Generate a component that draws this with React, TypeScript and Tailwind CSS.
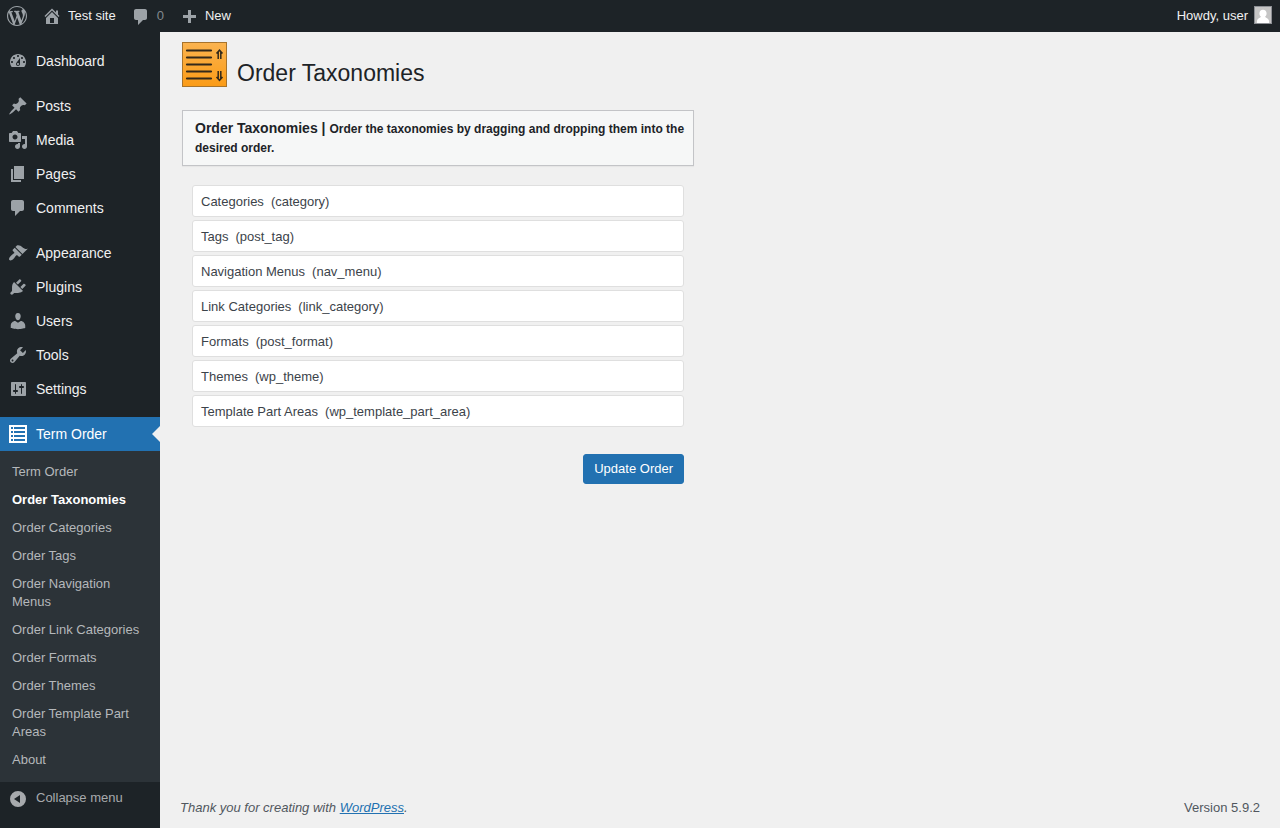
import type { ReactNode } from "react"
import clsx from "clsx"

type IconProps = {
  path: string
  className?: string
}

type MenuEntry = {
  label: string
  icon: string
}

const icons = {
  wordpress:
    "M20 10c0-5.51-4.49-10-10-10C4.48 0 0 4.49 0 10c0 5.52 4.48 10 10 10 5.51 0 10-4.48 10-10zM7.78 15.37L4.37 6.22c.55-.02 1.17-.08 1.17-.08.5-.06.44-1.13-.06-1.11 0 0-1.45.11-2.37.11-.18 0-.37 0-.58-.01C4.12 2.69 6.87 1.11 10 1.11c2.33 0 4.45.87 6.05 2.34-.68-.11-1.65.39-1.65 1.58 0 .74.45 1.36.9 2.1.35.61.55 1.36.55 2.46 0 1.49-1.4 5-1.4 5l-3.03-8.37c.54-.02.82-.17.82-.17.5-.05.44-1.25-.06-1.22 0 0-1.44.12-2.38.12-.87 0-2.33-.12-2.33-.12-.5-.03-.56 1.2-.06 1.22l.92.08 1.26 3.41zM17.41 10c.24-.64.74-1.87.43-4.25.7 1.29 1.05 2.71 1.05 4.25 0 3.29-1.73 6.24-4.4 7.78.97-2.59 1.94-5.2 2.92-7.78zM6.1 18.09C3.12 16.65 1.11 13.53 1.11 10c0-1.3.23-2.48.72-3.59C3.25 10.3 4.67 14.2 6.1 18.09zm4.03-6.63l2.58 6.98c-.86.29-1.76.45-2.71.45-.79 0-1.57-.11-2.29-.33.81-2.38 1.62-4.74 2.42-7.1z",
  home: "M16 8.5l1.53 1.53-1.06 1.06L10 4.6l-6.47 6.49-1.06-1.06L10 2.5l4 4v-2h2v4zm-6-2.46l6 5.99V18H4v-5.97zM12 17v-5H8v5h4z",
  plus: "M17 7v3h-5v5H9v-5H4V7h5V2h3v5h5z",
  dashboard:
    "M3.76 16h12.48c1.1-1.37 1.76-3.11 1.76-5 0-4.42-3.58-8-8-8s-8 3.58-8 8c0 1.89.66 3.63 1.76 5zM10 4c.55 0 1 .45 1 1s-.45 1-1 1-1-.45-1-1 .45-1 1-1zM6 6c.55 0 1 .45 1 1s-.45 1-1 1-1-.45-1-1 .45-1 1-1zm8 0c.55 0 1 .45 1 1s-.45 1-1 1-1-.45-1-1 .45-1 1-1zm-5.37 5.55L12 7v6c0 1.1-.9 2-2 2s-2-.9-2-2c0-.57.24-1.08.63-1.45zM4 10c.55 0 1 .45 1 1s-.45 1-1 1-1-.45-1-1 .45-1 1-1zm12 0c.55 0 1 .45 1 1s-.45 1-1 1-1-.45-1-1 .45-1 1-1zm-5 3c0-.55-.45-1-1-1s-1 .45-1 1 .45 1 1 1 1-.45 1-1z",
  post: "M10.44 3.02l1.82-1.82 6.36 6.35-1.83 1.82c-1.05-.68-2.48-.57-3.41.36l-.75.75c-.92.93-1.04 2.35-.35 3.41l-1.83 1.82-2.41-2.41-2.8 2.79c-.42.42-3.38 2.71-3.8 2.29s1.86-3.39 2.28-3.81l2.79-2.79L4.1 9.36l1.83-1.82c1.05.69 2.48.57 3.4-.36l.75-.75c.93-.92 1.05-2.35.36-3.41z",
  media:
    "M13 11V4c0-.55-.45-1-1-1h-1.67L9 1H5L3.67 3H2c-.55 0-1 .45-1 1v7c0 .55.45 1 1 1h10c.55 0 1-.45 1-1zM7 4.5c1.38 0 2.5 1.12 2.5 2.5S8.38 9.5 7 9.5 4.5 8.38 4.5 7 5.62 4.5 7 4.5zM14 6h5v10.5c0 1.38-1.12 2.5-2.5 2.5S14 17.88 14 16.5s1.12-2.5 2.5-2.5c.17 0 .34.02.5.05V9h-3V6zm-4 8.05V13h2v3.5c0 1.38-1.12 2.5-2.5 2.5S7 17.88 7 16.5 8.12 14 9.5 14c.17 0 .34.02.5.05z",
  page: "M6 15V2h10v13H6zm-1 1h8v2H3V5h2v11z",
  comments:
    "M5 2h9c1.1 0 2 .9 2 2v7c0 1.1-.9 2-2 2h-2l-5 5v-5H5c-1.1 0-2-.9-2-2V4c0-1.1.9-2 2-2z",
  appearance:
    "M14.48 11.06L7.41 3.99l1.5-1.5c.5-.56 2.3-.47 3.51.32 1.21.8 1.43 1.28 2.91 2.1 1.18.64 2.45 1.26 4.45.85zm-.71.71L6.7 4.7 4.93 6.47c-.39.39-.39 1.02 0 1.41l1.06 1.06c.39.39.39 1.03 0 1.42-.6.6-1.43 1.11-2.21 1.69-.35.26-.7.53-1.01.84C1.43 14.23.4 16.08 1.4 17.07c.99 1 2.84-.03 4.18-1.36.31-.31.58-.66.85-1.02.57-.78 1.08-1.61 1.69-2.21.39-.39 1.02-.39 1.41 0l1.06 1.06c.39.39 1.02.39 1.41 0z",
  plugins:
    "M13.11 4.36L9.87 7.6 8 5.73l3.24-3.24c.35-.34 1.05-.2 1.56.32.52.51.66 1.21.31 1.55zm-8 1.77l.91-1.12 9.01 9.01-1.19.84c-.71.71-2.63 1.16-3.82 1.16H6.14L4.9 17.26c-.59.59-1.54.59-2.12 0-.59-.58-.59-1.53 0-2.12l1.24-1.24v-3.88c0-1.13.4-3.19 1.09-3.89zm7.26 3.97l3.24-3.24c.34-.35 1.04-.21 1.55.31.52.51.66 1.21.31 1.55l-3.24 3.25z",
  users:
    "M10 9.25c-2.27 0-2.73-3.44-2.73-3.44C7 4.02 7.82 2 9.97 2c2.16 0 2.98 2.02 2.71 3.81 0 0-.41 3.44-2.68 3.44zm0 2.57L12.72 10c2.39 0 4.52 2.33 4.52 4.53v2.49s-3.65 1.13-7.24 1.13c-3.65 0-7.24-1.13-7.24-1.13v-2.49c0-2.25 1.94-4.48 4.47-4.48z",
  tools:
    "M16.68 9.77c-1.34 1.34-3.3 1.67-4.95.99l-5.41 6.52c-.99.99-2.59.99-3.58 0s-.99-2.59 0-3.57l6.52-5.42c-.68-1.65-.35-3.61.99-4.95 1.28-1.28 3.12-1.62 4.72-1.06l-2.89 2.89 2.82 2.82 2.86-2.87c.53 1.58.18 3.39-1.08 4.65zM3.81 16.21c.4.39 1.04.39 1.43 0 .4-.4.4-1.04 0-1.43-.39-.4-1.03-.4-1.43 0-.39.39-.39 1.03 0 1.43z",
  settings:
    "M18 16V4c0-.55-.45-1-1-1H4c-.55 0-1 .45-1 1v12c0 .55.45 1 1 1h13c.55 0 1-.45 1-1zM8 11h1c.55 0 1 .45 1 1s-.45 1-1 1H8v1.5c0 .28-.22.5-.5.5s-.5-.22-.5-.5V13H6c-.55 0-1-.45-1-1s.45-1 1-1h1V5.5c0-.28.22-.5.5-.5s.5.22.5.5V11zm5-2h-1c-.55 0-1-.45-1-1s.45-1 1-1h1V5.5c0-.28.22-.5.5-.5s.5.22.5.5V7h1c.55 0 1 .45 1 1s-.45 1-1 1h-1v5.5c0 .28-.22.5-.5.5s-.5-.22-.5-.5V9z",
  collapse: "M10 2a8 8 0 1 0 0 16 8 8 0 0 0 0-16zm2 4v8l-6-4z",
  termOrder:
    "M1 1h18v18H1zM3 3v2h2V3zm3 0v2h11V3zM3 7v2h2V7zm3 0v2h11V7zM3 11v2h2v-2zm3 0v2h11v-2zM3 15v2h2v-2zm3 0v2h11v-2z",
}

const menuGroups: MenuEntry[][] = [
  [{ label: "Dashboard", icon: icons.dashboard }],
  [
    { label: "Posts", icon: icons.post },
    { label: "Media", icon: icons.media },
    { label: "Pages", icon: icons.page },
    { label: "Comments", icon: icons.comments },
  ],
  [
    { label: "Appearance", icon: icons.appearance },
    { label: "Plugins", icon: icons.plugins },
    { label: "Users", icon: icons.users },
    { label: "Tools", icon: icons.tools },
    { label: "Settings", icon: icons.settings },
  ],
]

const submenu = [
  "Term Order",
  "Order Taxonomies",
  "Order Categories",
  "Order Tags",
  "Order Navigation Menus",
  "Order Link Categories",
  "Order Formats",
  "Order Themes",
  "Order Template Part Areas",
  "About",
]

const taxonomies = [
  { label: "Categories", name: "category" },
  { label: "Tags", name: "post_tag" },
  { label: "Navigation Menus", name: "nav_menu" },
  { label: "Link Categories", name: "link_category" },
  { label: "Formats", name: "post_format" },
  { label: "Themes", name: "wp_theme" },
  { label: "Template Part Areas", name: "wp_template_part_area" },
]

function Icon({ path, className }: IconProps) {
  return (
    <svg
      viewBox="0 0 20 20"
      fill="currentColor"
      fillRule="evenodd"
      aria-hidden="true"
      className={clsx("size-5 shrink-0", className)}
    >
      <path d={path} />
    </svg>
  )
}

function BarLink({ children, className }: { children: ReactNode; className?: string }) {
  return (
    <a href="#" className={clsx("flex h-8 items-center gap-1.5 pr-2", className)}>
      {children}
    </a>
  )
}

function AdminBar() {
  return (
    <header className="flex h-8 justify-between bg-[#1d2327] text-[13px] text-[#f0f0f1]">
      <nav aria-label="Toolbar" className="flex">
        <a href="#" aria-label="About WordPress" className="flex h-8 items-center px-[7px]">
          <Icon path={icons.wordpress} className="text-[#9ca2a7]" />
        </a>
        <BarLink className="pl-2">
          <Icon path={icons.home} className="text-[#9ca2a7]" />
          Test site
        </BarLink>
        <BarLink className="pl-[7px] text-[#9ca2a7]">
          <Icon path={icons.comments} className="mt-0.5" />
          <span className="opacity-80">0</span>
        </BarLink>
        <BarLink className="pl-[7px]">
          <Icon path={icons.plus} className="mt-1 text-[#9ca2a7]" />
          New
        </BarLink>
      </nav>
      <a href="#" className="flex items-center gap-1.5 px-2">
        Howdy, user
        <svg viewBox="0 0 18 18" aria-hidden="true" className="-mt-0.5 size-[18px]">
          <rect width="18" height="18" fill="#8c8f94" />
          <rect x="1" y="1" width="16" height="16" fill="#c5c5c5" />
          <path
            d="M9 3.8c2.2 0 3.6 1.5 3.6 3.6 0 1.6-.8 2.7-1.6 3.4.2.9 3.2 1.2 4 4 .1.7.1 1.4.1 2.2H2.9c0-.8 0-1.5.1-2.2.8-2.8 3.8-3.1 4-4-.8-.7-1.6-1.800-1.600-3.400 0-2.100 1.400-3.600 3.600-3.600z"
            fill="#fff"
          />
        </svg>
      </a>
    </header>
  )
}

function Sidebar() {
  return (
    <aside className="w-40 shrink-0 bg-[#1d2327] pt-3 text-[#f0f0f1]">
      <nav aria-label="Main menu">
        {menuGroups.map((group) => (
          <ul key={group[0].label} className="mb-[11px]">
            {group.map((entry) => (
              <li key={entry.label}>
                <a href="#" className="flex h-[34px] items-center gap-2 pl-2 text-sm">
                  <Icon path={entry.icon} className="text-[#9ca2a7]" />
                  {entry.label}
                </a>
              </li>
            ))}
          </ul>
        ))}

        <a
          href="#"
          className="relative flex h-[34px] items-center gap-2 bg-[#2271b1] pl-2 text-sm text-white"
        >
          <Icon path={icons.termOrder} />
          Term Order
          <span className="absolute top-1/2 right-0 -mt-2 border-8 border-l-0 border-transparent border-r-[#f0f0f0]" />
        </a>
        <ul className="bg-[#2c3338] pt-[7px] pb-2">
          {submenu.map((label) => (
            <li key={label}>
              <a
                href="#"
                className={clsx(
                  "block px-3 py-[5px] text-[13px] leading-[18px]",
                  label === "Order Taxonomies" ? "font-semibold text-white" : "text-[#b5b8bb]",
                )}
              >
                {label}
              </a>
            </li>
          ))}
        </ul>
      </nav>
      <button
        type="button"
        className="flex h-[34px] w-full items-center gap-2 pl-2 text-[13px] text-[#a7aaad]"
      >
        <Icon path={icons.collapse} />
        <span className="pb-0.5">Collapse menu</span>
      </button>
    </aside>
  )
}

function PluginLogo() {
  return (
    <svg viewBox="0 0 45 45" aria-hidden="true" className="size-[45px] shrink-0">
      <defs>
        <linearGradient id="logo-fill" x1="0" y1="0" x2="0" y2="1">
          <stop offset="0" stopColor="#fbb450" />
          <stop offset="1" stopColor="#fb9b16" />
        </linearGradient>
      </defs>
      <rect x=".5" y=".5" width="44" height="44" fill="url(#logo-fill)" stroke="#a8742c" />
      <path
        d="M5 8.5h24M5 15.5h24M5 22.5h24M5 29.5h24M5 36.5h24"
        stroke="#33291a"
        strokeWidth="2.2"
        strokeLinecap="round"
      />
      <path
        d="M36.2 17V9.500M38.800 17V9.500M34.500 11.600l3-3.400 3 3.400M36.200 29v7.500M38.800 29v7.500M34.500 34.900l3 3.400 3-3.400"
        stroke="#33291a"
        strokeWidth="1.5"
        fill="none"
      />
    </svg>
  )
}

function OrderForm() {
  return (
    <form className="max-w-[512px]">
      <h2 className="border border-[#c3c4c7] bg-[#f6f7f7] py-2 pr-2 pl-3 text-sm leading-[19px] font-semibold text-[#1d2327] shadow-[0_1px_1px_rgba(0,0,0,0.04)]">
        Order Taxonomies |{" "}
        <small className="text-xs leading-none">
          Order the taxonomies by dragging and dropping them into the desired order.
        </small>
      </h2>

      <div className="px-2.5 pt-[19px]">
        <ul className="space-y-[3px]">
          {taxonomies.map((taxonomy) => (
            <li
              key={taxonomy.name}
              className="flex h-8 cursor-move items-center gap-[7px] rounded-[3px] border border-[#dfdfdf] bg-white px-2 pt-0.5 text-[13px] text-[#3c434a]"
            >
              <span>{taxonomy.label}</span>
              <span>({taxonomy.name})</span>
            </li>
          ))}
        </ul>
        <div className="mt-[27px] flex justify-end">
          <button
            type="button"
            className="h-[30px] rounded-[3px] border border-[#2271b1] bg-[#2271b1] px-2.5 text-[13px] leading-7 text-white"
          >
            Update Order
          </button>
        </div>
      </div>
    </form>
  )
}

export default function App() {
  return (
    <div className="flex min-h-screen flex-col bg-[#f0f0f0] font-['Liberation_Sans',Arial,sans-serif]">
      <AdminBar />
      <div className="flex flex-1">
        <Sidebar />
        <div className="flex min-w-0 flex-1 flex-col">
          <main className="flex-1 px-[22px] pt-2.5">
            <div className="mb-[23px] flex items-end gap-2.5">
              <PluginLogo />
              <h1 className="text-[23px] leading-7 text-[#1d2327]">Order Taxonomies</h1>
            </div>
            <OrderForm />
          </main>
          <footer className="flex justify-between px-5 py-2.5 text-[13px] leading-5 text-[#50575e]">
            <p className="italic">
              Thank you for creating with{" "}
              <a href="#" className="text-[#2271b1] underline">
                WordPress
              </a>
              .
            </p>
            <p>Version 5.9.2</p>
          </footer>
        </div>
      </div>
    </div>
  )
}
